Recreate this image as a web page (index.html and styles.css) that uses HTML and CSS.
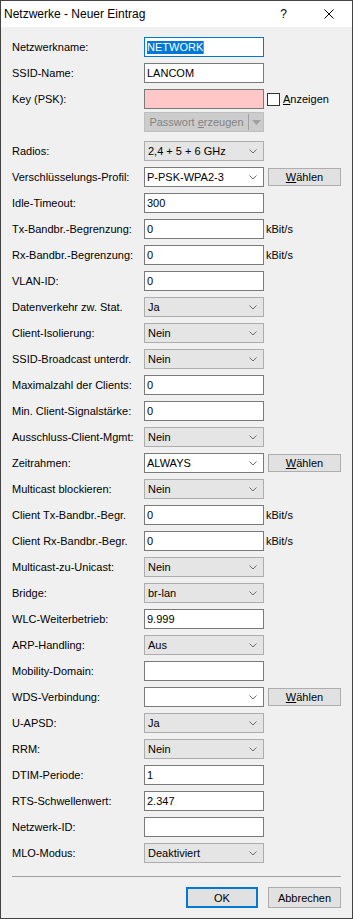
FILE: index.html
```html
<!DOCTYPE html>
<html lang="de">
<head>
  <meta charset="UTF-8" />
  <title>Netzwerke - Neuer Eintrag</title>
  <link rel="stylesheet" href="styles.css">
</head>
<body>

<div class="window">
  <header class="titlebar">
    <span class="title">Netzwerke - Neuer Eintrag</span>
    <span class="help">?</span>
    <svg class="close" width="10" height="10" viewBox="0 0 10 10"><path d="M0.5 0.5 L9.5 9.5 M9.5 0.5 L0.5 9.5" stroke="#000" stroke-width="1" fill="none"/></svg>
  </header>

  <section class="form">
    <div class="row"><span class="label">Netzwerkname:</span><div class="edit focus"><span class="sel">NETWORK</span><span class="caret"></span></div></div>
    <div class="row"><span class="label">SSID-Name:</span><div class="edit">LANCOM</div></div>
    <div class="row key"><span class="label">Key (PSK):</span><div class="edit pink"></div>
      <span class="check"><span class="box"></span><span><u>A</u>nzeigen</span></span></div>
    <div class="row gen"><span class="label"></span><div class="split"><span class="split-text">Passwort <u>e</u>rzeugen</span><span class="split-arrow"><svg width="9" height="5" viewBox="0 0 9 5"><path d="M0 0 H9 L4.5 5 Z" fill="#a0a0a0"/></svg></span></div></div>

    <div class="row"><span class="label">Radios:</span><div class="combo">2,4 + 5 + 6 GHz</div></div>
    <div class="row"><span class="label">Verschlüsselungs-Profil:</span><div class="combo white">P-PSK-WPA2-3</div><button class="btn pick"><u>W</u>ählen</button></div>
    <div class="row"><span class="label">Idle-Timeout:</span><div class="edit">300</div></div>
    <div class="row"><span class="label">Tx-Bandbr.-Begrenzung:</span><div class="edit">0</div><span class="unit">kBit/s</span></div>
    <div class="row"><span class="label">Rx-Bandbr.-Begrenzung:</span><div class="edit">0</div><span class="unit">kBit/s</span></div>
    <div class="row"><span class="label">VLAN-ID:</span><div class="edit">0</div></div>
    <div class="row"><span class="label">Datenverkehr zw. Stat.</span><div class="combo">Ja</div></div>
    <div class="row"><span class="label">Client-Isolierung:</span><div class="combo">Nein</div></div>
    <div class="row"><span class="label">SSID-Broadcast unterdr.</span><div class="combo">Nein</div></div>
    <div class="row"><span class="label">Maximalzahl der Clients:</span><div class="edit">0</div></div>
    <div class="row"><span class="label">Min. Client-Signalstärke:</span><div class="edit">0</div></div>
    <div class="row"><span class="label">Ausschluss-Client-Mgmt:</span><div class="combo">Nein</div></div>
    <div class="row"><span class="label">Zeitrahmen:</span><div class="combo white">ALWAYS</div><button class="btn pick"><u>W</u>ählen</button></div>
    <div class="row"><span class="label">Multicast blockieren:</span><div class="combo">Nein</div></div>
    <div class="row"><span class="label">Client Tx-Bandbr.-Begr.</span><div class="edit">0</div><span class="unit">kBit/s</span></div>
    <div class="row"><span class="label">Client Rx-Bandbr.-Begr.</span><div class="edit">0</div><span class="unit">kBit/s</span></div>
    <div class="row"><span class="label">Multicast-zu-Unicast:</span><div class="combo">Nein</div></div>
    <div class="row"><span class="label">Bridge:</span><div class="combo">br-lan</div></div>
    <div class="row"><span class="label">WLC-Weiterbetrieb:</span><div class="edit">9.999</div></div>
    <div class="row"><span class="label">ARP-Handling:</span><div class="combo">Aus</div></div>
    <div class="row"><span class="label">Mobility-Domain:</span><div class="edit"></div></div>
    <div class="row"><span class="label">WDS-Verbindung:</span><div class="combo white"></div><button class="btn pick"><u>W</u>ählen</button></div>
    <div class="row"><span class="label">U-APSD:</span><div class="combo">Ja</div></div>
    <div class="row"><span class="label">RRM:</span><div class="combo">Nein</div></div>
    <div class="row"><span class="label">DTIM-Periode:</span><div class="edit">1</div></div>
    <div class="row"><span class="label">RTS-Schwellenwert:</span><div class="edit">2.347</div></div>
    <div class="row"><span class="label">Netzwerk-ID:</span><div class="edit"></div></div>
    <div class="row"><span class="label">MLO-Modus:</span><div class="combo">Deaktiviert</div></div>
  </section>

  <footer class="footer">
    <button class="btn default">OK</button>
    <button class="btn">Abbrechen</button>
  </footer>
</div>

<script>
// chevrons for all drop-down boxes
document.querySelectorAll('.combo').forEach(function (c) {
  c.insertAdjacentHTML('beforeend',
    '<svg class="chev" width="8" height="5" viewBox="0 0 8 5"><path d="M0.5 0.5 L4 4 L7.5 0.5" stroke="#6d6d6d" stroke-width="1" fill="none"/></svg>');
});
</script>

</body>
</html>
```

FILE: styles.css
```css
* {
  margin: 0;
  padding: 0;
  box-sizing: border-box;
}

body {
  background: #f0f0f0;
  font-family: 'Liberation Sans', Arial, sans-serif;
  font-size: 11px;
  color: #000;
}

.window {
  width: 353px;
  height: 919px;
  border: 1px solid #434343;
  background: #f0f0f0;
  display: flex;
  flex-direction: column;
}

.titlebar {
  height: 26px;
  background: #fff;
  display: flex;
  align-items: center;
  padding-left: 3px;
  flex-shrink: 0;
}

.title {
  font-size: 12px;
  flex: 1;
}

.help {
  font-size: 12px;
  margin-right: 37px;
}

.close {
  margin-right: 18px;
}

.form {
  padding: 10px 0 0 11px;
  display: flex;
  flex-direction: column;
  gap: 6px;
}

.row {
  display: flex;
  align-items: center;
  height: 20px;
}

.row.key {
  margin-bottom: -3px;
}

.row.gen {
  margin-bottom: 3px;
}

.label {
  width: 132px;
  flex-shrink: 0;
  white-space: nowrap;
}

.edit,
.combo {
  width: 120px;
  height: 20px;
  border: 1px solid #7a7a7a;
  background: #fff;
  padding-left: 2px;
  line-height: 18px;
  white-space: nowrap;
  position: relative;
}

.edit.focus {
  border-color: #0078d7;
}

.edit.pink {
  background: #ffc7c7;
}

.sel {
  background: #0078d7;
  color: #fff;
  display: inline-block;
  line-height: 13px;
}

.caret {
  display: inline-block;
  width: 1px;
  height: 13px;
  background: #e8762d;
  vertical-align: middle;
  margin-top: -2px;
}

.combo {
  background: #e5e5e5;
  border-color: #adadad;
  padding-left: 3px;
}

.combo.white {
  background: #fff;
  border-color: #7a7a7a;
  padding-left: 2px;
}

.chev {
  position: absolute;
  right: 6px;
  top: 7px;
}

.unit {
  margin-left: 2px;
}

.check {
  display: flex;
  align-items: center;
  margin-left: 3px;
}

.check .box {
  width: 13px;
  height: 13px;
  border: 1px solid #333;
  background: #fff;
  margin-right: 3px;
}

.split {
  width: 120px;
  height: 20px;
  border: 1px solid #bfbfbf;
  background: #cccccc;
  color: #838383;
  display: flex;
  align-items: center;
}

.split-text {
  flex: 1;
  text-align: center;
}

.split-arrow {
  width: 15px;
  height: 16px;
  border-left: 1px solid #a0a0a0;
  display: flex;
  align-items: center;
  justify-content: center;
}

.btn {
  font-family: inherit;
  font-size: 11px;
  color: #000;
  background: #e1e1e1;
  border: 1px solid #adadad;
  height: 21px;
  width: 73px;
}

.btn.pick {
  height: 18px;
  margin-left: 4px;
}

.footer {
  margin: 13px 11px 0 11px;
  border-top: 1px solid #a0a0a0;
  padding-top: 10px;
  display: flex;
  justify-content: flex-end;
  gap: 10px;
}

.btn.default {
  width: 72px;
  border: 2px solid #0078d7;
}
```
